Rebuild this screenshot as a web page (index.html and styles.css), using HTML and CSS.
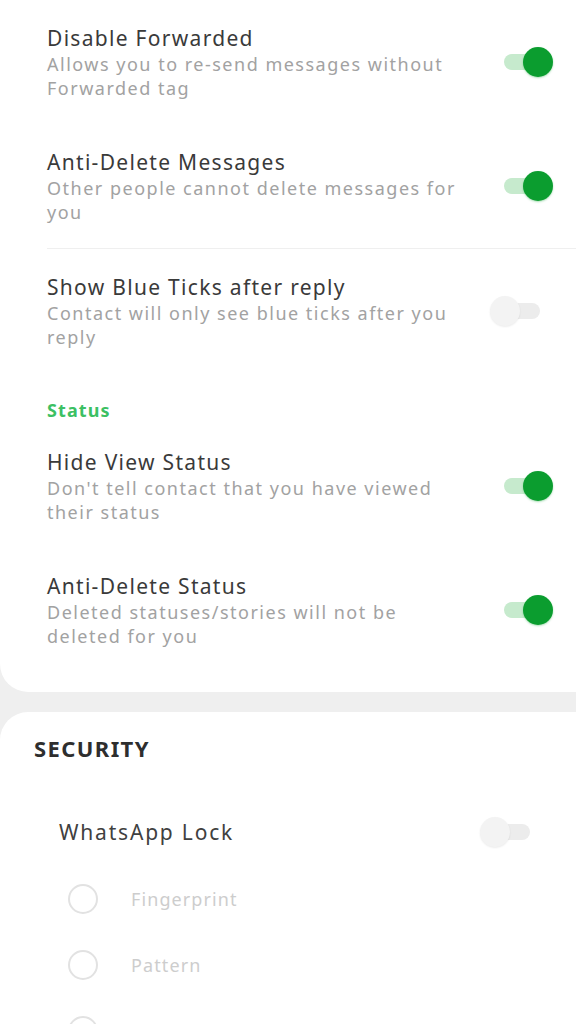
FILE: index.html
```html
<!DOCTYPE html>
<html>
<head>
<meta charset="utf-8">
<link rel="stylesheet" href="styles.css">
</head>
<body>
<div class="card card-top">
  <div class="row">
    <div class="text">
      <div class="title">Disable Forwarded</div>
      <div class="sub">Allows you to re-send messages without Forwarded tag</div>
    </div>
    <div class="toggle on"><span class="track"></span><span class="thumb"></span></div>
  </div>
  <div class="row">
    <div class="text">
      <div class="title">Anti-Delete Messages</div>
      <div class="sub">Other people cannot delete messages for you</div>
    </div>
    <div class="toggle on"><span class="track"></span><span class="thumb"></span></div>
  </div>
  <div class="divider"></div>
  <div class="row">
    <div class="text">
      <div class="title">Show Blue Ticks after reply</div>
      <div class="sub">Contact will only see blue ticks after you reply</div>
    </div>
    <div class="toggle off"><span class="track"></span><span class="thumb"></span></div>
  </div>
  <div class="group">Status</div>
  <div class="row">
    <div class="text">
      <div class="title">Hide View Status</div>
      <div class="sub">Don't tell contact that you have viewed their status</div>
    </div>
    <div class="toggle on"><span class="track"></span><span class="thumb"></span></div>
  </div>
  <div class="row">
    <div class="text">
      <div class="title">Anti-Delete Status</div>
      <div class="sub">Deleted statuses/stories will not be deleted for you</div>
    </div>
    <div class="toggle on"><span class="track"></span><span class="thumb"></span></div>
  </div>
</div>
<div class="card card-bottom">
  <div class="section">SECURITY</div>
  <div class="lock-row">
    <div class="lock-title">WhatsApp Lock</div>
    <div class="toggle off"><span class="track"></span><span class="thumb"></span></div>
  </div>
  <div class="radio-row"><span class="radio"></span><span class="radio-label">Fingerprint</span></div>
  <div class="radio-row"><span class="radio"></span><span class="radio-label">Pattern</span></div>
  <div class="radio-row"><span class="radio"></span></div>
</div>
</body>
</html>
```
FILE: styles.css
```css
html, body {
  margin: 0;
  padding: 0;
}
body {
  background: #efefef;
  font-family: "Noto Sans", Roboto, "Liberation Sans", sans-serif;
  width: 576px;
  height: 1024px;
  overflow: hidden;
  display: flex;
  flex-direction: column;
}
.card {
  background: #ffffff;
}
.card-top {
  border-bottom-left-radius: 28px;
  padding: 0 0 20px 47px;
  flex: none;
}
.card-bottom {
  margin-top: 20px;
  border-top-left-radius: 28px;
  padding: 24px 0 0 34px;
  flex: 1;
  min-height: 0;
  overflow: hidden;
}
.row {
  display: flex;
  align-items: center;
  justify-content: space-between;
  padding: 24px 22px 24px 0;
}
.text {
  width: 414px;
}
.title {
  font-size: 21px;
  line-height: 28px;
  color: #3a3a3a;
  letter-spacing: 1.3px;
}
.sub {
  font-size: 18px;
  line-height: 24px;
  color: #a2a2a2;
  letter-spacing: 1.5px;
}
.divider {
  height: 1px;
  background: #efefef;
}
.group {
  padding: 27px 0 4px 0;
  font-size: 18px;
  line-height: 20px;
  font-weight: bold;
  color: #3cc063;
  letter-spacing: 1.1px;
}
.toggle {
  position: relative;
  width: 64px;
  height: 32px;
  flex: none;
}
.toggle .track {
  position: absolute;
  left: 14px;
  top: 8px;
  width: 40px;
  height: 16px;
  border-radius: 8px;
}
.toggle .thumb {
  position: absolute;
  top: 1px;
  width: 30px;
  height: 30px;
  border-radius: 50%;
}
.toggle.on .track {
  background: #c6eacd;
}
.toggle.on .thumb {
  left: 33px;
  background: #0b9d2f;
  box-shadow: 0 1px 2px rgba(11, 157, 47, 0.35);
}
.toggle.off .track {
  background: #ececec;
  width: 36px;
}
.toggle.off .thumb {
  left: 0;
  background: #f3f3f3;
  box-shadow: 0 1px 2px rgba(0, 0, 0, 0.08);
}
.section {
  font-size: 22px;
  line-height: 24px;
  font-weight: bold;
  color: #2e2e2e;
  letter-spacing: 1.4px;
}
.lock-row {
  display: flex;
  align-items: center;
  justify-content: space-between;
  margin-top: 42px;
  height: 60px;
  padding: 0 32px 0 25px;
}
.lock-title {
  font-size: 21px;
  color: #404040;
  letter-spacing: 1.8px;
}
.radio-row {
  display: flex;
  align-items: center;
  height: 66px;
  padding-left: 34px;
}
.lock-row + .radio-row {
  margin-top: 4px;
}
.radio {
  width: 26px;
  height: 26px;
  border: 2px solid #e2e2e2;
  border-radius: 50%;
  flex: none;
}
.radio-label {
  margin-left: 33px;
  font-size: 18px;
  color: #cdcdcd;
  letter-spacing: 1.1px;
}
```
